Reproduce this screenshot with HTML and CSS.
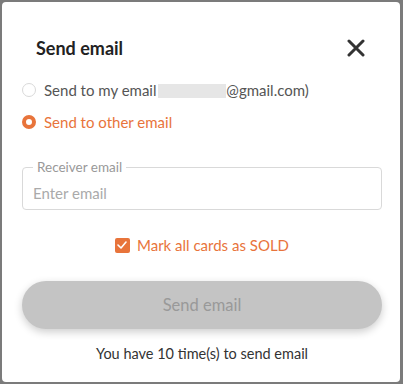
FILE: index.html
```html
<!DOCTYPE html>
<html>
<head>
<meta charset="utf-8">
<link rel="stylesheet" href="styles.css">
</head>
<body>
<div class="backdrop">
  <div class="dialog">
    <div class="header">
      <h2 class="title">Send email</h2>
      <button class="close" aria-label="Close">
        <svg width="18" height="18" viewBox="0 0 18 18"><path d="M2 2 L16 16 M16 2 L2 16" stroke="#333" stroke-width="3" stroke-linecap="round"/></svg>
      </button>
    </div>
    <div class="options">
      <label class="option">
        <span class="radio"></span>
        <span class="opt-text">Send to my email <span class="redact"></span>@gmail.com)</span>
      </label>
      <label class="option active">
        <span class="radio checked"></span>
        <span class="opt-text">Send to other email</span>
      </label>
    </div>
    <fieldset class="field">
      <legend class="legend">Receiver email</legend>
      <div class="placeholder">Enter email</div>
    </fieldset>
    <div class="check-row">
      <span class="checkbox">
        <svg width="10" height="8" viewBox="0 0 10 8"><path d="M1 4 L4 7 L9 1" stroke="#fff" stroke-width="1.6" fill="none" stroke-linecap="round" stroke-linejoin="round"/></svg>
      </span>
      <span class="check-label">Mark all cards as SOLD</span>
    </div>
    <button class="send">Send email</button>
    <p class="note">You have 10 time(s) to send email</p>
  </div>
</div>
</body>
</html>
```
FILE: styles.css
```css
html, body { margin: 0; padding: 0; }
body {
  width: 403px;
  height: 384px;
  background: #7b7b7b;
  font-family: "Lato", "Noto Sans", sans-serif;
  overflow: hidden;
}
.backdrop {
  padding: 2px 3px 2px 2px;
  height: 380px;
}
.dialog {
  background: #fff;
  border-radius: 4px;
  height: 380px;
  box-sizing: border-box;
  padding: 0 18px 0 20px;
}
.header {
  display: flex;
  justify-content: space-between;
  align-items: center;
  padding: 32px 17px 0 14px;
  height: 28px;
}
.title {
  margin: 0;
  font-size: 18px;
  font-weight: 700;
  color: #222;
}
.close {
  background: none;
  border: 0;
  padding: 0;
  width: 18px;
  height: 18px;
  display: block;
}
.close svg { display: block; }
.options {
  margin-top: 18px;
  display: flex;
  flex-direction: column;
  gap: 12px;
}
.option {
  display: flex;
  align-items: center;
  height: 20px;
  font-size: 15px;
  color: #555;
}
.option.active { color: #e8743b; }
.radio {
  width: 14px;
  height: 14px;
  box-sizing: border-box;
  border: 1px solid #d9d9d9;
  border-radius: 50%;
  margin-right: 8px;
  flex: none;
}
.radio.checked {
  border: 4px solid #e8743b;
  background: #fff;
}
.redact {
  display: inline-block;
  width: 68px;
  height: 14px;
  background: #e6e6e6;
  vertical-align: -2px;
  margin-left: -2px;
}
.field {
  margin: 34px 0 0 0;
  border: 1px solid #d9d9d9;
  border-radius: 4px;
  padding: 0 10px;
  height: 51px;
  box-sizing: border-box;
  position: relative;
  top: -7px;
}
.legend {
  font-size: 13.5px;
  color: #999;
  padding: 0 4px;
  margin-left: 0;
}
.placeholder {
  font-size: 15px;
  color: #aaa;
  margin-top: 9px;
}
.check-row {
  display: flex;
  align-items: center;
  justify-content: center;
  gap: 7px;
  margin-top: 19px;
}
.checkbox {
  width: 15px;
  height: 15px;
  background: #e8743b;
  border-radius: 2px;
  display: flex;
  align-items: center;
  justify-content: center;
}
.check-label {
  font-size: 15px;
  color: #e8743b;
}
.send {
  display: block;
  width: 100%;
  height: 48px;
  margin-top: 27px;
  border: 0;
  border-radius: 24px;
  background: #c4c4c4;
  color: #999;
  font-family: inherit;
  font-size: 16.5px;
  box-shadow: 0 3px 8px rgba(0,0,0,0.2);
}
.note {
  margin: 16px 0 0 0;
  text-align: center;
  font-size: 14.5px;
  color: #333;
}
```
